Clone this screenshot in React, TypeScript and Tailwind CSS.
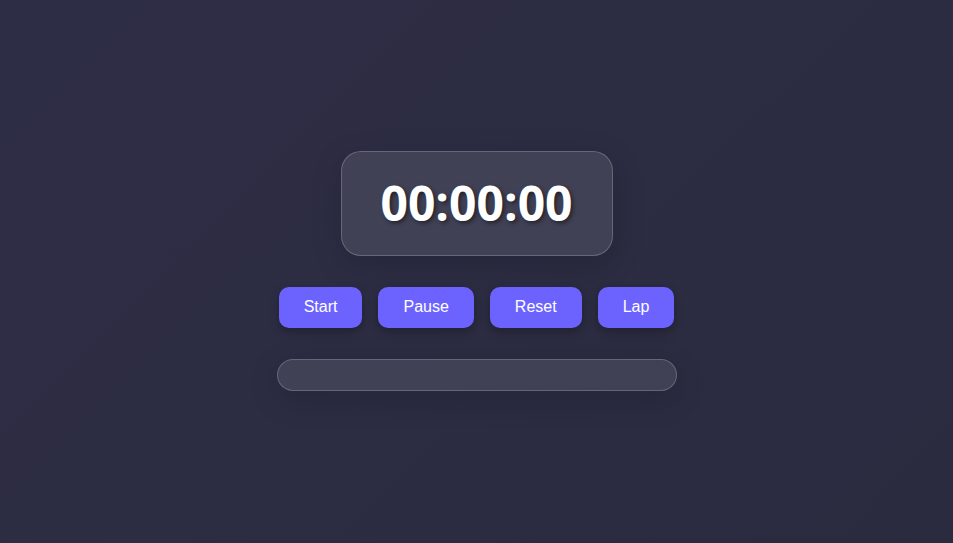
export default function App() {
  const buttons = ["Start", "Pause", "Reset", "Lap"];

  return (
    <div className="min-h-screen w-full flex flex-col items-center justify-center pb-[2px] bg-[linear-gradient(135deg,#2e2d46,#2a2b3f)] [font-family:'Liberation_Sans',Arial,sans-serif]">
      {/* timer display */}
      <div className="w-[272px] h-[105px] flex items-center justify-center rounded-[20px] bg-white/10 border border-white/20 shadow-[0_8px_32px_rgba(0,0,0,0.15)]">
        <span className="text-[48px] font-bold text-white leading-none [font-family:'Open_Sans',sans-serif] [text-shadow:2px_2px_4px_rgba(0,0,0,0.5)]">
          00:00:00
        </span>
      </div>

      {/* controls */}
      <div className="flex gap-4 mt-[31px]">
        {buttons.map((label) => (
          <button
            key={label}
            className="h-[41px] px-[25px] rounded-[10px] bg-[#6c63ff] text-white text-base shadow-[0_4px_10px_rgba(0,0,0,0.25)]"
          >
            {label}
          </button>
        ))}
      </div>

      {/* laps */}
      <div className="w-[400px] h-[32px] mt-[31px] rounded-full bg-white/10 border border-white/20 shadow-[0_8px_32px_rgba(0,0,0,0.15)]" />
    </div>
  );
}
